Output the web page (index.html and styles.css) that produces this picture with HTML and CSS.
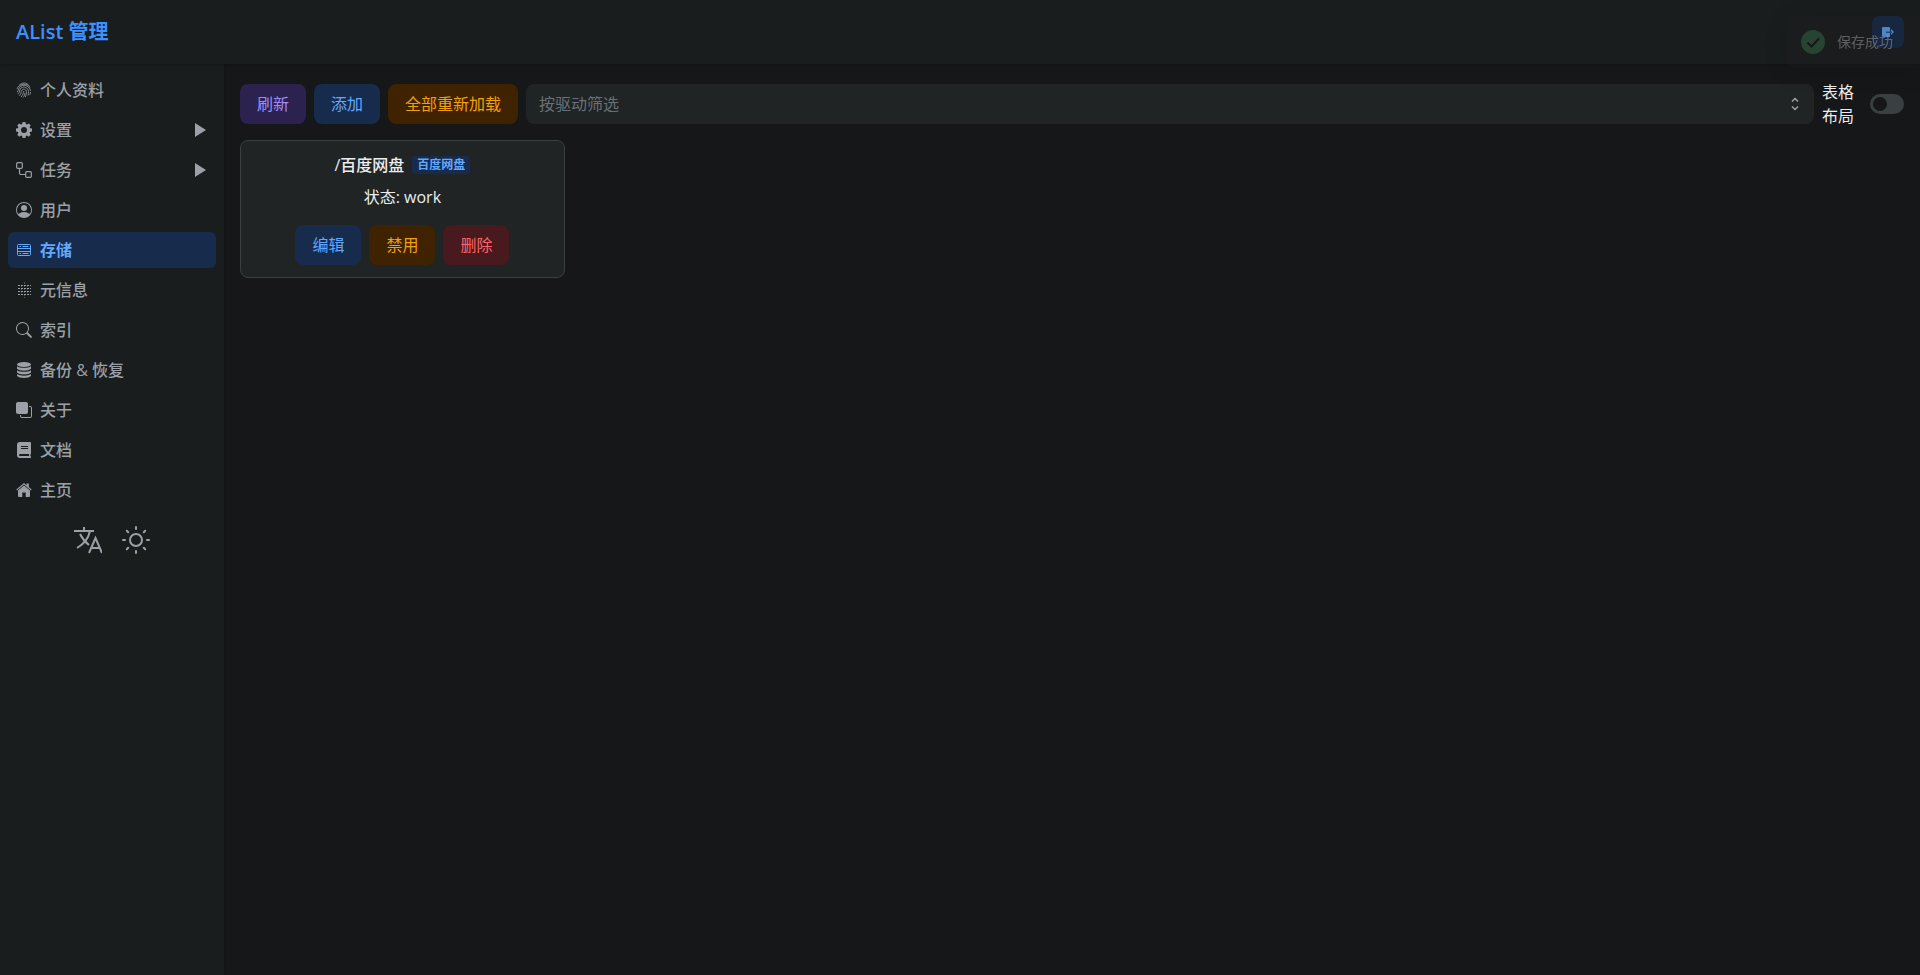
FILE: index.html
```html
<!DOCTYPE html>
<html lang="zh-CN">
<head>
    <meta charset="UTF-8">
    <meta name="viewport" content="width=device-width, initial-scale=1">
    <title>AList 管理</title>
    <link rel="stylesheet" href="styles.css">
</head>
<body>

<header class="header">
    <h1 class="brand">AList 管理</h1>
    <button class="logout" type="button" aria-label="退出">
        <svg viewBox="0 0 12 12"><path d="M1 1h6a1 1 0 0 1 1 1v8a1 1 0 0 1-1 1H1a1 1 0 0 1-1-1V2a1 1 0 0 1 1-1z"/><path d="M9 3l3 3-3 3z"/><path class="shaft" d="M4 5.500h6v1.500H4z"/></svg>
    </button>
</header>

<div class="layout">
    <nav class="sidebar">
        <a class="item" href="#profile">
            <svg viewBox="0 0 16 16" class="line thin"><path d="M3 3.500C6 .2 10.500.3 13 3.500M1 7C2.500 1.500 11.500.5 14 5.500M1 10c2-1.500 1-4.500 4-6 4-2 9 .5 9.500 5M1.800 12C4.500 10 3 7.500 5 6c3-2.500 7.500 0 7.500 3.500 0 1.500 0 2.500-.5 4M3.200 13.800C6 11.500 4.500 9.500 6 8c2-1.800 4.500-.3 4.500 2 0 2-.5 3.500-1.200 5M5 15c2.500-2 2-4.500 3-6M7 15.500c1.500-1.500 1.800-3 1.800-4.500M14.500 10c0 1.200-.3 2-.8 2.800"/></svg>
            <span>个人资料</span>
        </a>
        <a class="item" href="#settings">
            <svg viewBox="0 0 16 16"><path fill-rule="evenodd" d="M6.600 0h2.800l.5 2.100 1 .4 1.900-1.100 1.900 1.900-1.100 1.800.4 1.100 2 .4v2.800l-2 .5-.4 1 1.100 1.900-1.900 1.900-1.900-1.100-1 .4-.5 2H6.600l-.5-2-1-.4-1.900 1.100-1.900-1.900 1.100-1.900-.4-1L0 9.400V6.600l2-.4.4-1.100-1.100-1.800 1.900-1.900 1.900 1.100 1-.4zM8 5a3 3 0 1 0 0 6 3 3 0 0 0 0-6z"/></svg>
            <span>设置</span>
            <svg class="arrow" viewBox="0 0 12 14"><path d="M1 0l11 7-11 7z"/></svg>
        </a>
        <a class="item" href="#tasks">
            <svg viewBox="0 0 16 16" class="line"><rect x=".7" y=".7" width="5.600" height="5.600" rx="1"/><rect x="9.700" y="9.700" width="5.600" height="5.600" rx="1"/><path d="M3.500 6.300v4.700a1.500 1.500 0 0 0 1.500 1.500h4.700"/></svg>
            <span>任务</span>
            <svg class="arrow" viewBox="0 0 12 14"><path d="M1 0l11 7-11 7z"/></svg>
        </a>
        <a class="item" href="#users">
            <svg viewBox="0 0 16 16"><path d="M11 6a3 3 0 1 1-6 0 3 3 0 0 1 6 0z"/><path fill-rule="evenodd" d="M0 8a8 8 0 1 1 16 0A8 8 0 0 1 0 8zm8-7a7 7 0 0 0-5.468 11.370C3.242 11.226 4.805 10 8 10s4.757 1.225 5.468 2.370A7 7 0 0 0 8 1z"/></svg>
            <span>用户</span>
        </a>
        <a class="item active" href="#storages">
            <svg viewBox="0 0 16 16" class="line"><rect x="1.500" y="2.500" width="13" height="11" rx="1"/><path d="M1.500 6.500h13M1.500 9.500h13M3.500 4.500H5M6.500 4.500h6M3.500 11.500H5M6.500 11.500h6"/></svg>
            <span>存储</span>
        </a>
        <a class="item" href="#metas">
            <svg viewBox="0 0 16 16" class="line dots"><path d="M2 3.500h13M2 6.500h13M2 9.500h13M2 12.500h13"/><path class="axis" d="M8.500 0v16M5.500 3v10M11.500 3v10"/></svg>
            <span>元信息</span>
        </a>
        <a class="item" href="#indexes">
            <svg viewBox="0 0 16 16"><path d="M11.742 10.344a6.500 6.500 0 1 0-1.397 1.398l3.850 3.850a1 1 0 0 0 1.415-1.414l-3.850-3.850zM12 6.500a5.500 5.500 0 1 1-11 0 5.500 5.500 0 0 1 11 0z"/></svg>
            <span>索引</span>
        </a>
        <a class="item" href="#backup">
            <svg viewBox="0 0 16 16"><ellipse cx="8" cy="2.500" rx="7" ry="2.500"/><path d="M1 4.200c3 2.200 11 2.200 14 0v2.600c-2 2.600-12 2.600-14 0z"/><path d="M1 8.200c3 2.200 11 2.200 14 0v2.300c-2 2.600-12 2.600-14 0z"/><path d="M1 12c3 2.200 11 2.200 14 0v1.700c-2 3-12 3-14 0z"/></svg>
            <span>备份 &amp; 恢复</span>
        </a>
        <a class="item" href="#about">
            <svg viewBox="0 0 16 16"><rect width="12" height="12" rx="2"/><path d="M13 4h1a2 2 0 0 1 2 2v8a2 2 0 0 1-2 2H6a2 2 0 0 1-2-2v-1h1v1a1 1 0 0 0 1 1h8a1 1 0 0 0 1-1V6a1 1 0 0 0-1-1h-1z"/></svg>
            <span>关于</span>
        </a>
        <a class="item" href="#docs">
            <svg viewBox="0 0 16 16"><path fill-rule="evenodd" d="M4 0h10a1 1 0 0 1 1 1v10.500a1 1 0 0 1-.6.900v1.800a.9.900 0 0 1-.4 1.800H4a3 3 0 0 1-3-3V3a3 3 0 0 1 3-3zM4 12a1 1 0 0 0 0 2h9v-2zM5 4v1h7V4zM5 6v1h7V6z"/></svg>
            <span>文档</span>
        </a>
        <a class="item" href="#home">
            <svg viewBox="0 0 16 16"><path d="M8 3.500l6 5V14a1 1 0 0 1-1 1H9.700v-4.500H6.300V15H3a1 1 0 0 1-1-1V8.500z"/><path d="M8 1l2.600 2.200V1.500h2.200V5L15.700 7.500l-.7.900L8 2.500 1 8.400l-.7-.9z"/></svg>
            <span>主页</span>
        </a>
        <div class="tools">
            <button type="button" aria-label="语言">
                <svg viewBox="0 0 28 28" class="line"><path d="M0 5h20M10 1v4M6 8c2 4 5 8 9 11M16 5c-1.500 7-6 13-13 17M15 27l6.500-15L28 27M17.500 22h8"/></svg>
            </button>
            <button type="button" aria-label="主题">
                <svg viewBox="0 0 28 28" class="line round"><circle cx="14" cy="14" r="6"/><path d="M14 1v2M14 25v2M1 14h2M25 14h2M4.800 4.800l1.400 1.400M21.800 21.800l1.400 1.400M4.800 23.200l1.400-1.400M21.800 6.200l1.400-1.400"/></svg>
            </button>
        </div>
    </nav>

    <main class="content">
        <div class="toolbar">
            <button class="btn accent" type="button">刷新</button>
            <button class="btn primary" type="button">添加</button>
            <button class="btn warning" type="button">全部重新加载</button>
            <div class="filter">
                <select aria-label="按驱动筛选">
                    <option>按驱动筛选</option>
                </select>
                <svg viewBox="0 0 16 16" class="line"><path d="M5 5.500l3-3 3 3M5 10.500l3 3 3-3"/></svg>
            </div>
            <label class="switch">
                <span>表格布局</span>
                <input type="checkbox" role="switch">
            </label>
        </div>

        <div class="grid">
            <section class="card">
                <div class="card-title">
                    <h2>/百度网盘</h2>
                    <span class="badge">百度网盘</span>
                </div>
                <p>状态: work</p>
                <div class="actions">
                    <button class="btn primary" type="button">编辑</button>
                    <button class="btn warning" type="button">禁用</button>
                    <button class="btn danger" type="button">删除</button>
                </div>
            </section>
        </div>
    </main>
</div>

<div class="toast" role="status">
    <svg viewBox="0 0 24 24"><circle cx="12" cy="12" r="12"/><path d="M6.500 12.500l4 4 7.500-8"/></svg>
    <span>保存成功</span>
</div>

</body>
</html>
```
FILE: styles.css
```css
* {
    box-sizing: border-box;
}
body {
    margin: 0;
    min-height: 100vh;
    display: flex;
    flex-direction: column;
    font-family: "Open Sans", "Noto Sans CJK SC", sans-serif;
    font-size: 16px;
    line-height: 24px;
    color: #ecedee;
    background-color: #161718;
}
h1, h2, p {
    margin: 0;
}
button, select {
    font: inherit;
    cursor: pointer;
}
svg {
    display: block;
    fill: currentColor;
}
.line {
    fill: none;
    stroke: currentColor;
    stroke-width: 1.2;
}
.header {
    position: relative;
    display: flex;
    align-items: center;
    justify-content: space-between;
    height: 64px;
    padding: 0 16px;
    background-color: #1a1d1e;
    box-shadow: 0 1px 3px rgba(0, 0, 0, 0.2);
}
.brand {
    font-size: 20px;
    font-weight: 600;
    color: #3b91ff;
}
.logout {
    display: grid;
    place-items: center;
    width: 32px;
    height: 32px;
    padding: 0;
    border: 0;
    border-radius: 8px;
    color: #62a8ff;
    background-color: #172b4d;
}
.logout svg {
    width: 12px;
    height: 12px;
}
.logout .shaft {
    fill: #2f568c;
}
.layout {
    display: flex;
    flex: 1;
}
.sidebar {
    display: flex;
    flex-direction: column;
    gap: 4px;
    width: 224px;
    padding: 8px;
    color: #9ba1a6;
    background-color: #1a1d1e;
    box-shadow: 1px 0 2px rgba(0, 0, 0, 0.15);
}
.item {
    display: flex;
    align-items: center;
    gap: 8px;
    height: 36px;
    padding: 0 8px;
    border-radius: 6px;
    font-weight: 500;
    color: inherit;
    text-decoration: none;
}
.item svg {
    width: 16px;
    height: 16px;
}
.item .arrow {
    width: 12px;
    height: 14px;
    margin-left: auto;
    margin-right: 2px;
}
.item.active {
    color: #62a8ff;
    background-color: #172b4d;
    font-weight: 700;
}
.item.active .line {
    stroke-width: 1;
}
.thin {
    stroke-width: 0.8;
}
.dots {
    stroke-width: 1;
    stroke-dasharray: 2 1;
}
.dots .axis {
    opacity: 0.4;
}
.tools {
    display: flex;
    justify-content: center;
    gap: 20px;
    padding: 14px 0;
}
.tools button {
    padding: 0;
    border: 0;
    color: inherit;
    background: none;
}
.tools svg {
    width: 28px;
    height: 28px;
    stroke-width: 2;
}
.round {
    stroke-linecap: round;
}
.content {
    flex: 1;
    display: flex;
    flex-direction: column;
    gap: 12px;
    padding: 16px;
}
.toolbar {
    display: flex;
    align-items: center;
    gap: 8px;
}
.btn {
    height: 40px;
    padding: 0 16px;
    border: 1px solid transparent;
    border-radius: 8px;
    line-height: 24px;
}
.accent {
    color: #9e8cfc;
    background-color: #2c2250;
}
.primary {
    color: #62a8ff;
    background-color: #172b4d;
}
.warning {
    color: #f1a10d;
    background-color: #3f2200;
}
.danger {
    color: #ff6369;
    background-color: #481a1d;
}
.filter {
    display: grid;
    flex: 1;
    align-items: center;
}
.filter select {
    grid-area: 1 / 1;
    width: 100%;
    height: 40px;
    padding: 0 12px;
    border: 1px solid transparent;
    border-radius: 8px;
    appearance: none;
    color: #697177;
    background-color: #202425;
}
.filter svg {
    grid-area: 1 / 1;
    justify-self: end;
    width: 16px;
    height: 16px;
    margin-right: 11px;
    color: #9ba1a6;
    stroke-width: 1.5;
    pointer-events: none;
}
.switch {
    display: flex;
    align-items: center;
    gap: 16px;
}
.switch span {
    width: 2em;
}
.switch input {
    appearance: none;
    display: flex;
    align-items: center;
    width: 34px;
    height: 20px;
    margin: 0;
    padding: 0 3px;
    border-radius: 10px;
    background-color: #3a3f42;
}
.switch input::before {
    content: "";
    width: 14px;
    height: 14px;
    border-radius: 50%;
    background-color: #161718;
}
.switch input:checked {
    justify-content: flex-end;
    background-color: #3b91ff;
}
.grid {
    display: grid;
    grid-template-columns: repeat(auto-fill, minmax(300px, 1fr));
    gap: 10px;
}
.card {
    display: flex;
    flex-direction: column;
    align-items: center;
    gap: 8px;
    padding: 12px;
    border: 1px solid #3a3f42;
    border-radius: 8px;
    background-color: #202425;
}
.card-title {
    display: flex;
    align-items: center;
    gap: 8px;
}
.card h2 {
    font-size: 16px;
    font-weight: 500;
}
.badge {
    padding: 0 5px;
    border-radius: 3px;
    font-size: 12px;
    font-weight: 700;
    line-height: 18px;
    color: #62a8ff;
    background-color: #172b4d;
}
.actions {
    display: flex;
    gap: 8px;
    margin-top: 8px;
}
.toast {
    position: fixed;
    top: 16px;
    right: 0;
    display: flex;
    align-items: center;
    gap: 12px;
    height: 52px;
    padding: 0 27px 0 14px;
    border-radius: 8px 0 0 8px;
    font-size: 14px;
    color: rgba(236, 237, 238, 0.32);
    background-color: rgba(28, 28, 29, 0.25);
    box-shadow: 0 4px 24px rgba(0, 0, 0, 0.12);
    pointer-events: none;
}
.toast svg {
    width: 24px;
    height: 24px;
    fill: #264431;
}
.toast path {
    fill: none;
    stroke: #161718;
    stroke-width: 2;
}
```
